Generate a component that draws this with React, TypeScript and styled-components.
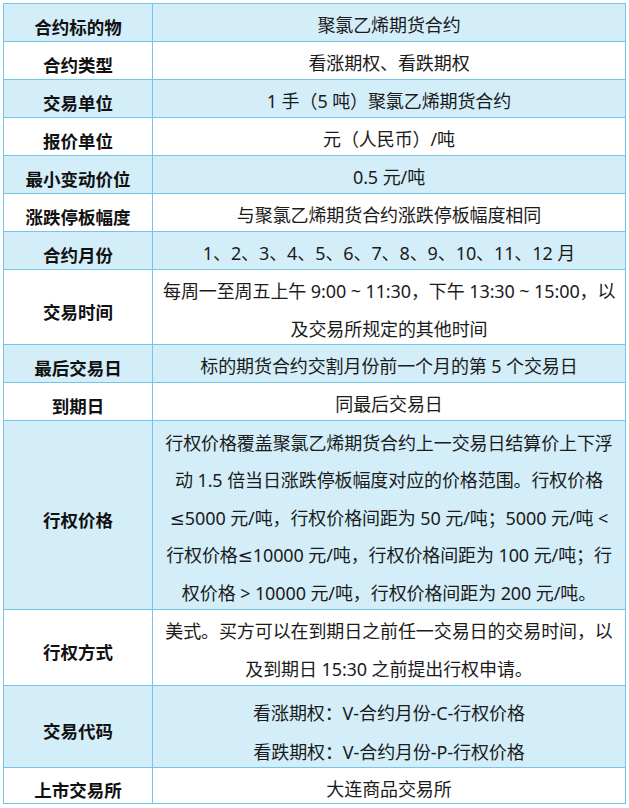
import React from "react"
import styled, { createGlobalStyle } from "styled-components"

const GlobalStyle = createGlobalStyle`
  html, body {
    margin: 0;
    padding: 0;
    background: #ffffff;
  }
  body {
    font-family: "Noto Sans", "DejaVu Sans", "Noto Sans CJK SC", sans-serif;
    color: #1b1b1b;
  }
`

const Wrapper = styled.div`
  padding: 3px;
`

const Table = styled.table`
  width: 623px;
  border-collapse: collapse;
  table-layout: fixed;
  border: 1.5px solid #72c6e9;
`

const Row = styled.tr<{ $shaded: boolean }>`
  background-color: ${({ $shaded }) => ($shaded ? "#d3eef9" : "#ffffff")};
`

const Label = styled.th`
  width: 148px;
  border: 1px solid #72c6e9;
  font-family: "Noto Sans CJK SC", sans-serif;
  font-size: 17.5px;
  font-weight: 700;
  text-align: center;
  vertical-align: middle;
  padding: 0;
  color: #111111;
`

const LabelText = styled.div`
  line-height: 31px;
  margin: 4px 0 -4px;
`

const Value = styled.td`
  border: 1px solid #72c6e9;
  font-size: 18px;
  font-weight: 400;
  text-align: center;
  vertical-align: top;
  padding: 0 10px;
  letter-spacing: -0.1px;
`

const ValueText = styled.div<{ $height: number; $offset: number; $lineHeight: number }>`
  box-sizing: border-box;
  height: ${({ $height }) => $height}px;
  padding-top: ${({ $offset }) => $offset}px;
  line-height: ${({ $lineHeight }) => $lineHeight}px;
`

const Line = styled.div`
  white-space: nowrap;
`

interface IRowData {
  label: string
  lines: string[]
  height?: number
  offset?: number
  lineHeight?: number
}

const rows: IRowData[] = [
  { label: "合约标的物", lines: ["聚氯乙烯期货合约"] },
  { label: "合约类型", lines: ["看涨期权、看跌期权"] },
  { label: "交易单位", lines: ["1 手（5 吨）聚氯乙烯期货合约"] },
  { label: "报价单位", lines: ["元（人民币）/吨"] },
  { label: "最小变动价位", lines: ["0.5 元/吨"] },
  { label: "涨跌停板幅度", lines: ["与聚氯乙烯期货合约涨跌停板幅度相同"] },
  { label: "合约月份", lines: ["1、2、3、4、5、6、7、8、9、10、11、12 月"] },
  {
    label: "交易时间",
    lines: ["每周一至周五上午 9:00 ~ 11:30，下午 13:30 ~ 15:00，以", "及交易所规定的其他时间"],
    height: 74,
    offset: 1.75,
    lineHeight: 38.5,
  },
  { label: "最后交易日", lines: ["标的期货合约交割月份前一个月的第 5 个交易日"] },
  { label: "到期日", lines: ["同最后交易日"] },
  {
    label: "行权价格",
    lines: [
      "行权价格覆盖聚氯乙烯期货合约上一交易日结算价上下浮",
      "动 1.5 倍当日涨跌停板幅度对应的价格范围。行权价格",
      "≤5000 元/吨，行权价格间距为 50 元/吨；5000 元/吨 <",
      "行权价格≤10000 元/吨，行权价格间距为 100 元/吨；行",
      "权价格 > 10000 元/吨，行权价格间距为 200 元/吨。",
    ],
    height: 188,
    offset: 3.75,
    lineHeight: 37.5,
  },
  {
    label: "行权方式",
    lines: ["美式。买方可以在到期日之前任一交易日的交易时间，以", "及到期日 15:30 之前提出行权申请。"],
    height: 75,
    offset: 3,
    lineHeight: 37.5,
  },
  {
    label: "交易代码",
    lines: ["看涨期权：V-合约月份-C-行权价格", "看跌期权：V-合约月份-P-行权价格"],
    height: 81,
    offset: 8.25,
    lineHeight: 38.5,
  },
  { label: "上市交易所", lines: ["大连商品交易所"], height: 35 },
]

export default function App() {
  return (
    <Wrapper>
      <GlobalStyle />
      <Table>
        <tbody>
          {rows.map((row, i) => (
            <Row key={row.label} $shaded={i % 2 === 0}>
              <Label>
                <LabelText>{row.label}</LabelText>
              </Label>
              <Value>
                <ValueText
                  $height={row.height ?? 37}
                  $offset={row.offset ?? 2.5}
                  $lineHeight={row.lineHeight ?? 37}
                >
                  {row.lines.map((line) => (
                    <Line key={line}>{line}</Line>
                  ))}
                </ValueText>
              </Value>
            </Row>
          ))}
        </tbody>
      </Table>
    </Wrapper>
  )
}
